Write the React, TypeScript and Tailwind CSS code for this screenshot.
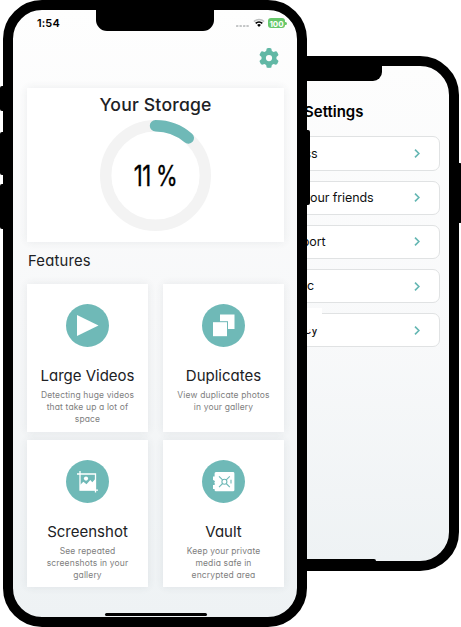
import React from "react";
import { FaGear } from "react-icons/fa6";

const rows = [
  { label: "ss", box: "w-[88.5px]" },
  { label: "your friends", box: "w-[144.5px]" },
  { label: "port", box: "w-[96.5px]" },
  { label: "c", box: "w-[85px]" },
  { label: "cy", box: "w-[89px]" },
];

function SettingsPhone() {
  return (
    <div className="relative col-start-1 row-start-1 ml-[209px] mt-14 h-[515px] w-[250px] rounded-[39px] border-[10px] border-black bg-linear-to-b from-[#fdfdfd] via-[#f8f9fa] via-55% to-[#eef2f4]">
      <div className="absolute -right-[12.5px] top-[97px] h-[60px] w-[4px] rounded-r-[2px] bg-black" />
      <div className="mx-auto h-[15px] w-[96px] rounded-b-[9px] bg-black" />
      <h1 className="mt-[20px] w-[144.5px] whitespace-nowrap text-right text-[15px] font-semibold leading-[22px] text-black">
        Settings
      </h1>
      <div className="ml-[9px] mt-[13.4px] flex w-[212px] flex-col gap-[10px]">
        {rows.map((r) => (
          <div
            key={r.label}
            className="flex h-[34.2px] items-center justify-between rounded-[7px] border border-[#e0e2e3] bg-white pr-[19px]"
          >
            <span className={`whitespace-nowrap pt-px text-right text-[12.5px] tracking-[-0.1px] text-[#111] ${r.box}`}>
              {r.label}
            </span>
            <svg width="6" height="9" viewBox="0 0 6 9" fill="none" stroke="#65b7b3" strokeWidth="1.7">
              <path d="M1 .7 4.9 4.5 1 8.3" />
            </svg>
          </div>
        ))}
      </div>
      <div className="absolute left-[80px] top-[242px] h-[7px] w-[23px] bg-white" />
      <div className="absolute left-[80px] top-[257px] h-[6px] w-[19px] bg-white" />
      <div className="absolute bottom-0 left-[74px] h-[2px] w-[83px] rounded-t-[2px] bg-black" />
    </div>
  );
}

function StatusBar() {
  return (
    <div className="flex h-[21px] justify-between">
      <span className="w-[83px] pl-[24px] pt-[5px] text-[11px] font-semibold leading-[16px] tracking-[0.1px] text-black">
        1:54
      </span>
      <div className="h-[21px] w-[118px] rounded-b-[11px] bg-black" />
      <div className="flex w-[83px] items-start pl-[21px] pt-[8px]">
        <svg width="14" height="11" viewBox="0 0 14 11" fill="#c4c6c7">
          <rect x="1" y="7" width="2.4" height="2" rx=".6" />
          <rect x="4.5" y="7" width="2.4" height="2" rx=".6" />
          <rect x="8" y="7" width="2.4" height="2" rx=".6" />
          <rect x="11.4" y="7" width="2.4" height="2" rx=".6" />
        </svg>
        <svg className="ml-[4px]" width="12" height="10" viewBox="0 0 12 10" fill="none">
          <path d="M.9 3.6a7.2 7.2 0 0 1 10.2 0" stroke="#bfc1c1" strokeWidth="1.5" />
          <path d="M2.7 5.4a4.7 4.7 0 0 1 6.6 0" stroke="#000" strokeWidth="1.7" />
          <path d="M4.1 7a2.7 2.7 0 0 1 3.8 0L6 9Z" fill="#000" />
        </svg>
        <span className="ml-[3px] flex h-[10px] w-[17px] items-center justify-center rounded-[3px] bg-[#67c86b] pt-px text-[8px] font-bold leading-none text-white">
          100
        </span>
        <span className="mt-[3.5px] h-[3px] w-[1.5px] rounded-r-full bg-[#67c86b]" />
      </div>
    </div>
  );
}

const icons: Record<string, React.ReactNode> = {
  video: <path d="M11 11 32.5 21.5 11 32Z" fill="#fff" />,
  duplicate: (
    <g fill="#fff">
      <rect x="18" y="10.5" width="14.5" height="14.5" />
      <rect x="10" y="17.2" width="16" height="15.5" fill="#6fb9b7" />
      <rect x="11" y="18.2" width="14" height="14" />
    </g>
  ),
  screenshot: (
    <g>
      <path d="M14 11v19.2h18M11 14h18.5v18.5" fill="none" stroke="#fff" strokeWidth="1.3" />
      <path d="m14 25 3.4-3.3 3.1 2.6 3.8-4.3 2 2.2 3.2-3.4v11.4H14Z" fill="#fff" />
      <circle cx="20" cy="18.6" r="2.1" fill="#fff" />
    </g>
  ),
  vault: (
    <g>
      <path
        d="M14 12h17a1.4 1.4 0 0 1 1.4 1.4v16.5a1.4 1.4 0 0 1-1.4 1.4H14a1.4 1.4 0 0 1-1.4-1.4v-1H11v-4h1.2l1-1-1-1 .8-1.4-.8-1-1.2-.6v-3.4h1.6v-3A1.4 1.4 0 0 1 14 12Z"
        fill="#fff"
      />
      <g stroke="#6fb9b7" strokeWidth="1.1" fill="none">
        <circle cx="22.4" cy="21.7" r="2.5" />
        <path d="m17 16.3 3.6 3.6m3.6 3.6 3.6 3.6m0-10.8-3.6 3.6m-3.6 3.6L17 27.1M29 19.8v3.8" />
      </g>
    </g>
  ),
};

function FeatureCard({ icon, title, lines }: { icon: string; title: string; lines: string[] }) {
  return (
    <div className="flex flex-col items-center bg-white pt-[20px] shadow-[0_0_8px_rgba(60,70,80,0.09)]">
      <svg width="43" height="43" viewBox="0 0 43 43">
        <circle cx="21.5" cy="21.5" r="21.5" fill="#6fb9b7" />
        {icons[icon]}
      </svg>
      <h3 className="mt-[19px] whitespace-nowrap text-[15px] font-normal leading-[20px] text-[#202124]">{title}</h3>
      <p className="mt-[3px] whitespace-nowrap text-center text-[8.5px] leading-[12px] tracking-[0.14px] text-[#808080]">
        {lines.map((l) => (
          <span key={l} className="block">
            {l}
          </span>
        ))}
      </p>
    </div>
  );
}

function MainPhone() {
  return (
    <div className="relative z-10 col-start-1 row-start-1 ml-[3px] h-[627px] w-[304px] rounded-[39px] border-[10px] border-black bg-linear-to-b from-[#fefefe] via-[#f7f8f9] via-50% to-[#eef2f4]">
      <div className="absolute -left-[13px] top-[76px] h-[25px] w-[5px] rounded-l-[2px] bg-black" />
      <div className="absolute -left-[13px] top-[122px] h-[43px] w-[5px] rounded-l-[2px] bg-black" />
      <div className="absolute -left-[13px] top-[174px] h-[45px] w-[5px] rounded-l-[2px] bg-black" />
      <div className="absolute -right-[13px] top-[120px] h-[75px] w-[5px] rounded-r-[2px] bg-black" />
      <StatusBar />
      <div className="flex h-[57px] justify-end pr-[18px] pt-[17px]">
        <FaGear size={20} color="#61b8a5" />
      </div>
      <div className="mx-[14px] mr-[13px]">
        <section className="flex h-[154px] flex-col items-center bg-white pt-[5px] shadow-[0_0_8px_rgba(60,70,80,0.09)]">
          <h2 className="whitespace-nowrap text-[17.6px] font-medium leading-[24px] tracking-[0.2px] text-[#202124]">
            Your Storage
          </h2>
          <div className="mt-[3px] grid place-items-center">
            <svg className="col-start-1 row-start-1" width="111" height="111" viewBox="0 0 111 111" fill="none" strokeWidth="11.4">
              <circle cx="55.5" cy="55.5" r="49.8" stroke="#f3f3f3" />
              <path d="M55.5 5.7A49.8 49.8 0 0 1 88.3 18" stroke="#6fb9b7" strokeLinecap="round" />
            </svg>
            <span className="col-start-1 row-start-1 scale-x-[0.79] whitespace-nowrap text-[28px] font-normal leading-none tracking-[-0.8px] text-black [-webkit-text-stroke:0.3px_#000]">
              11 %
            </span>
          </div>
        </section>
        <h2 className="mt-[8px] pl-[1px] text-[14.8px] font-normal leading-[22px] tracking-[0.2px] text-[#202124]">Features</h2>
        <div className="mt-[12px] grid grid-cols-2 grid-rows-[148px_147px] gap-x-[15px] gap-y-[8px]">
          <FeatureCard icon="video" title="Large Videos" lines={["Detecting huge videos", "that take up a lot of", "space"]} />
          <FeatureCard icon="duplicate" title="Duplicates" lines={["View duplicate photos", "in your gallery"]} />
          <FeatureCard icon="screenshot" title="Screenshot" lines={["See repeated", "screenshots in your", "gallery"]} />
          <FeatureCard icon="vault" title="Vault" lines={["Keep your private", "media safe in", "encrypted area"]} />
        </div>
      </div>
      <div className="ml-[92px] mt-[25.5px] h-[3.5px] w-[102px] rounded-full bg-black" />
    </div>
  );
}

export default function App() {
  return (
    <main className="grid h-[627px] w-[461px] grid-cols-1 grid-rows-1 items-start overflow-hidden bg-white font-[Inter,'Open_Sans',sans-serif] [font-feature-settings:'cv11']">
      <SettingsPhone />
      <MainPhone />
    </main>
  );
}
